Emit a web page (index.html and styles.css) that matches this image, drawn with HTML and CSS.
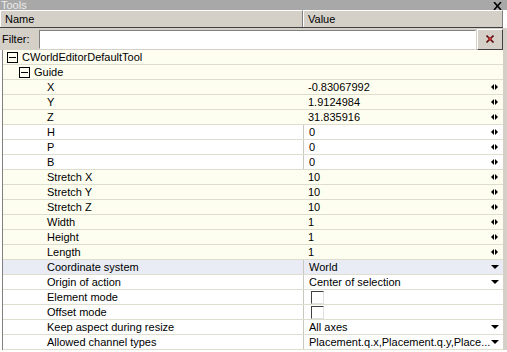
FILE: index.html
```html
<!DOCTYPE html>
<html lang="en">
<head>
  <meta charset="UTF-8" />
  <title>Tools</title>
  <link rel="stylesheet" href="styles.css">
</head>
<body>
  <div class="panel">
    <div class="titlebar">
      <span class="title">Tools</span>
      <svg class="close" width="9" height="8" viewBox="0 0 9 8">
        <path d="M1 0 L8 8 M8 0 L1 8" stroke="#000" stroke-width="1.6"/>
      </svg>
    </div>

    <div class="col-header">
      <div class="col-name">Name</div>
      <div class="col-value">Value</div>
    </div>

    <div class="filter-row">
      <label class="filter-label">Filter:</label>
      <input class="filter-input" type="text">
      <button class="filter-clear">
        <svg width="8" height="8" viewBox="0 0 8 8">
          <path d="M0.5 0.5 L7.5 7.5 M7.5 0.5 L0.5 7.5" stroke="#5a1010" stroke-width="1.6"/>
          <rect x="2.5" y="2.5" width="3" height="3" fill="#c42828"/>
        </svg>
      </button>
    </div>

    <div class="grid">
      <div class="row cream">
        <div class="name lvl0"><span class="toggle"></span>CWorldEditorDefaultTool</div>
        <div class="value"></div>
      </div>
      <div class="row cream">
        <div class="name lvl1"><span class="toggle"></span>Guide</div>
        <div class="value"></div>
      </div>
      <div class="row cream">
        <div class="name lvl2">X</div>
        <div class="value">-0.83067992<span class="spin"></span></div>
      </div>
      <div class="row cream">
        <div class="name lvl2">Y</div>
        <div class="value">1.9124984<span class="spin"></span></div>
      </div>
      <div class="row cream">
        <div class="name lvl2">Z</div>
        <div class="value">31.835916<span class="spin"></span></div>
      </div>
      <div class="row white">
        <div class="name lvl2">H</div>
        <div class="value boxed">0<span class="spin"></span></div>
      </div>
      <div class="row white">
        <div class="name lvl2">P</div>
        <div class="value boxed">0<span class="spin"></span></div>
      </div>
      <div class="row white">
        <div class="name lvl2">B</div>
        <div class="value boxed">0<span class="spin"></span></div>
      </div>
      <div class="row cream">
        <div class="name lvl2">Stretch X</div>
        <div class="value">10<span class="spin"></span></div>
      </div>
      <div class="row cream">
        <div class="name lvl2">Stretch Y</div>
        <div class="value">10<span class="spin"></span></div>
      </div>
      <div class="row cream">
        <div class="name lvl2">Stretch Z</div>
        <div class="value">10<span class="spin"></span></div>
      </div>
      <div class="row cream">
        <div class="name lvl2">Width</div>
        <div class="value">1<span class="spin"></span></div>
      </div>
      <div class="row cream">
        <div class="name lvl2">Height</div>
        <div class="value">1<span class="spin"></span></div>
      </div>
      <div class="row cream">
        <div class="name lvl2">Length</div>
        <div class="value">1<span class="spin"></span></div>
      </div>
      <div class="row blue">
        <div class="name lvl2">Coordinate system</div>
        <div class="value boxed">World<span class="drop"></span></div>
      </div>
      <div class="row white">
        <div class="name lvl2">Origin of action</div>
        <div class="value boxed">Center of selection<span class="drop"></span></div>
      </div>
      <div class="row white">
        <div class="name lvl2">Element mode</div>
        <div class="value boxed"><span class="check"></span></div>
      </div>
      <div class="row white">
        <div class="name lvl2">Offset mode</div>
        <div class="value boxed"><span class="check"></span></div>
      </div>
      <div class="row white">
        <div class="name lvl2">Keep aspect during resize</div>
        <div class="value boxed">All axes<span class="drop"></span></div>
      </div>
      <div class="row white">
        <div class="name lvl2">Allowed channel types</div>
        <div class="value boxed">Placement.q.x,Placement.q.y,Place...<span class="drop"></span></div>
      </div>
    </div>
  </div>
</body>
</html>
```

FILE: styles.css
```css
body {
  margin: 0;
  font-family: Tahoma, "Liberation Sans", sans-serif;
  font-size: 11px;
  color: #000;
  background-color: #fff;
}

.panel {
  width: 507px;
  height: 352px;
  overflow: hidden;
}

.titlebar {
  height: 10px;
  background-color: #a8a8a8;
  display: flex;
  justify-content: space-between;
  align-items: center;
}

.title {
  color: #ececec;
  font-size: 11px;
  line-height: 10px;
  padding-left: 1px;
}

.close {
  margin-right: 5px;
  margin-top: 1px;
}

.col-header {
  display: flex;
  height: 17px;
  background-color: #d4d0c8;
  border-bottom: 1px solid #404040;
  margin-right: 4px;
}

.col-name,
.col-value {
  box-sizing: border-box;
  border-top: 1px solid #fff;
  border-left: 1px solid #fff;
  border-right: 1px solid #808080;
  padding-left: 4px;
  line-height: 16px;
}

.col-name {
  width: 303px;
}

.col-value {
  flex: 1;
}

.filter-row {
  display: flex;
  align-items: center;
  height: 22px;
  background-color: #d4d0c8;
  padding: 0 4px 0 2px;
}

.filter-label {
  width: 37px;
}

.filter-input {
  box-sizing: border-box;
  width: 438px;
  height: 19px;
  margin: 0;
  border: 1px solid;
  border-color: #808080 #fff #fff #808080;
  background-color: #fff;
}

.filter-clear {
  box-sizing: border-box;
  width: 26px;
  height: 21px;
  margin: 0 0 0 1px;
  padding: 0;
  background-color: #d4d0c8;
  border: 1px solid;
  border-color: #fff #404040 #404040 #fff;
  display: flex;
  align-items: center;
  justify-content: center;
}

.grid {
  border-left: 1px solid #808080;
  border-right: 4px solid #d4d0c8;
  margin-left: 2px;
}

.row {
  display: grid;
  grid-template-columns: 300px 1fr;
  height: 15px;
  box-sizing: border-box;
  border-bottom: 1px solid #deddce;
  line-height: 14px;
}

.row.cream {
  background-color: #fefef0;
}

.row.white {
  background-color: #fff;
}

.row.blue {
  background-color: #e9ecf5;
}

.name {
  white-space: nowrap;
  overflow: hidden;
  display: flex;
  align-items: center;
}

.lvl0 { padding-left: 4px; }
.lvl1 { padding-left: 16px; }
.lvl2 { padding-left: 44px; }

.toggle {
  box-sizing: border-box;
  width: 11px;
  height: 11px;
  border: 1px solid #000;
  margin-right: 4px;
  position: relative;
}

.toggle::after {
  content: "";
  position: absolute;
  left: 1px;
  right: 1px;
  top: 4px;
  height: 1px;
  background-color: #000;
}

.value {
  box-sizing: border-box;
  padding-left: 5px;
  padding-right: 4px;
  display: flex;
  align-items: center;
  justify-content: space-between;
  white-space: nowrap;
  overflow: hidden;
}

.value.boxed {
  border-left: 1px solid #c8c8c0;
}

.spin {
  display: flex;
  gap: 1px;
  margin-right: 1px;
}

.spin::before,
.spin::after {
  content: "";
  width: 0;
  height: 0;
  border-top: 3px solid transparent;
  border-bottom: 3px solid transparent;
}

.spin::before {
  border-right: 3px solid #000;
}

.spin::after {
  border-left: 3px solid #000;
}

.drop {
  flex-shrink: 0;
  width: 0;
  height: 0;
  border-left: 4px solid transparent;
  border-right: 4px solid transparent;
  border-top: 4px solid #000;
}

.check {
  box-sizing: border-box;
  width: 13px;
  height: 13px;
  border: 1px solid;
  border-color: #404040 #e0e0e0 #e0e0e0 #404040;
  background-color: #fff;
  margin-left: 2px;
}
```
